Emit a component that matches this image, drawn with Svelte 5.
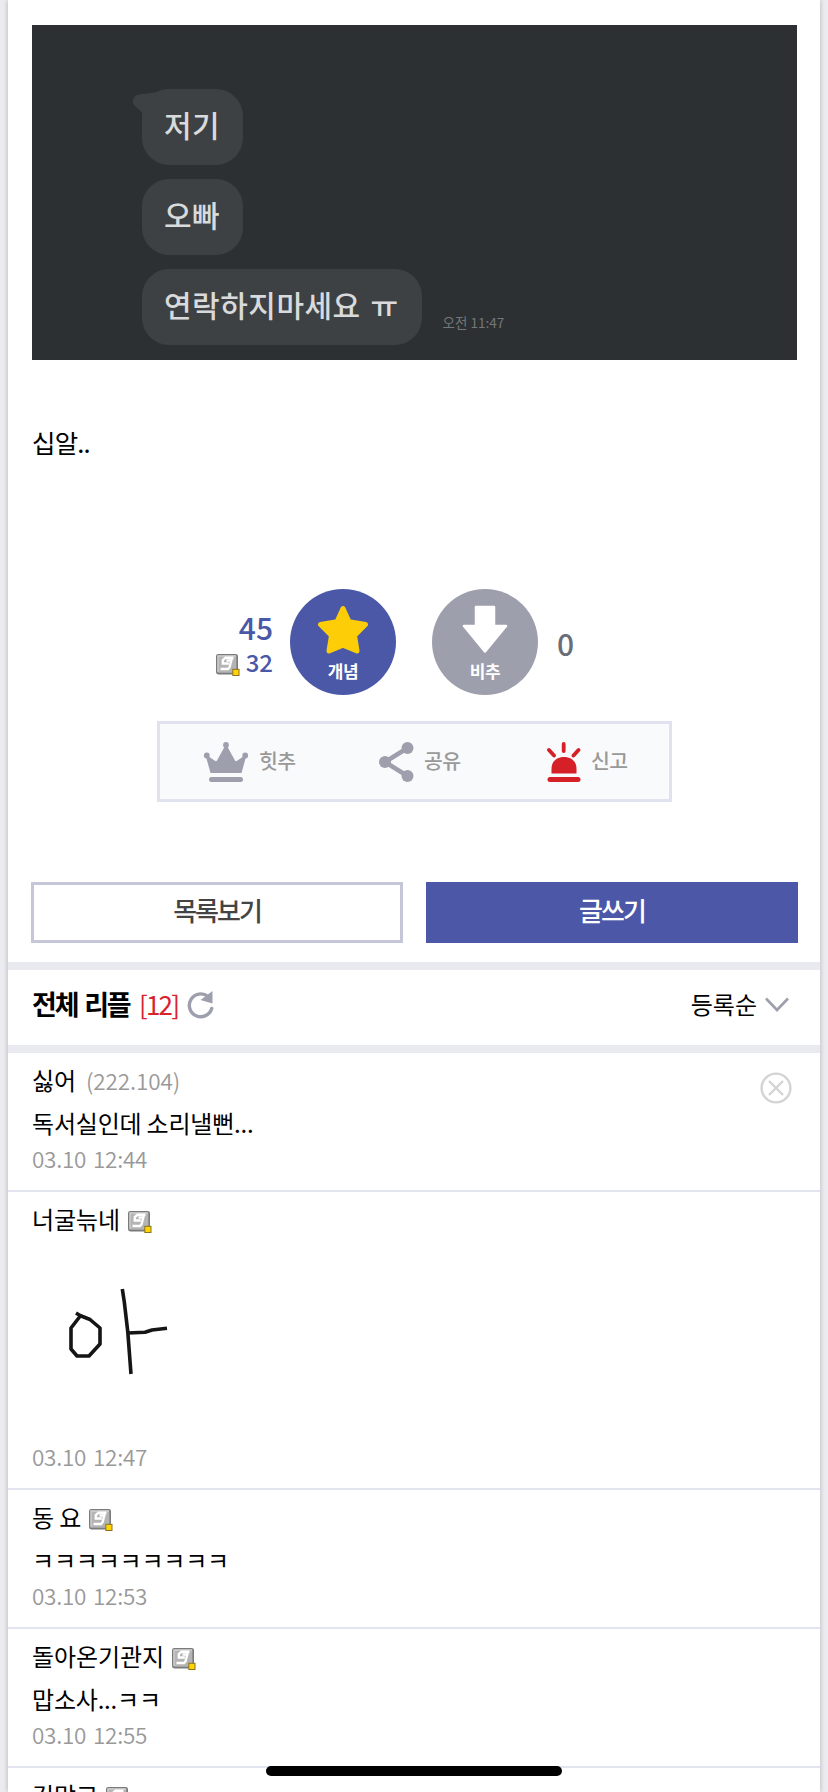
<script>
const messages = ['저기', '오빠', '연락하지마세요 ㅠ'];

const comments = [
    { name: '싫어', ip: '(222.104)', text: '독서실인데 소리낼뻔...', date: '03.10 12:44' },
    { name: '너굴늒네', drawing: true, date: '03.10 12:47' },
    { name: '동 요', text: 'ㅋㅋㅋㅋㅋㅋㅋㅋㅋ', date: '03.10 12:53' },
    { name: '돌아온기관지', text: '맙소사...ㅋㅋ', date: '03.10 12:55' },
    { name: '김망고', text: '', date: '' }
];
</script>

{#snippet memberIcon()}
    <svg class="member-icon" viewBox="0 0 24 22" width="24" height="22">
        <rect x="0.8" y="0.8" width="20.4" height="18.8" rx="1.5" fill="#b4b4b4" stroke="#7b7b7b" stroke-width="1.6" />
        <path d="M2 18V2h18" fill="none" stroke="#cfcfcf" stroke-width="1.4" />
        <path d="M17.5 3.8H9.5L6.8 6v3.5h6M16 4l-2.5 9.5-1.500 1.500H4.500M10.5 6.5h4" fill="none" stroke="#fff" stroke-width="2.4" />
        <rect x="16.8" y="15.3" width="6.2" height="6.2" fill="#ffd400" stroke="#8a7420" stroke-width="1" />
    </svg>
{/snippet}

<div class="page">
    <div class="chat">
        {#each messages as message, i}
            <div class="chat-row">
                <div class="bubble">
                    {#if i === 0}
                        <svg class="tail" viewBox="0 0 30 24" width="30" height="24"><path d="M30 1 22 3.5 6 5.5C0 6.5-2 13 2 17l9 8h19z" fill="#3d4143" /></svg>
                    {/if}
                    <span>{message}</span>
                </div>
                {#if i === messages.length - 1}
                    <span class="chat-time">오전 11:47</span>
                {/if}
            </div>
        {/each}
    </div>

    <p class="post-text">십알..</p>

    <div class="votes">
        <div class="vote-count up">
            <strong>45</strong>
            <div class="member-count">{@render memberIcon()}<span>32</span></div>
        </div>
        <button class="vote recommend">
            <svg viewBox="0 0 52 50" width="52" height="50"><path d="M26 3.500 32 16.800 48.500 19.500 37.500 30.500 40 46 26 40.300 12 46 14.500 30.500 3.500 19.500 20 16.800Z" fill="#fdce07" stroke="#fdce07" stroke-width="5" stroke-linejoin="round" /></svg>
            <span>개념</span>
        </button>
        <button class="vote against">
            <svg viewBox="0 0 52 50" width="52" height="50"><path d="M17 2h18v19h12L26 46.500 5 21h12z" fill="#fff" stroke="#fff" stroke-width="2.500" stroke-linejoin="round" /></svg>
            <span>비추</span>
        </button>
        <div class="vote-count down">0</div>
    </div>

    <div class="actions">
        <button class="action hit">
            <svg viewBox="0 0 46 40" width="46" height="40" fill="#9e9fac">
                <circle cx="23" cy="3" r="2.900" /><circle cx="3.800" cy="13.500" r="2.900" /><circle cx="42.200" cy="13.500" r="2.900" />
                <path d="M22 4h2l8 14.500q.8 1.200 2 .2l7.500-5 1.500 1L38.500 31H7.500L3 14.700l1.500-1 7.500 5q1.200 1 2-.2z" />
                <rect x="6" y="35" width="34" height="5" rx="2.500" />
            </svg>
            <span>힛추</span>
        </button>
        <button class="action share">
            <svg viewBox="0 0 35 40" width="35" height="40" fill="#9e9fac">
                <path d="M28.500 6 6 20l22.500 14" fill="none" stroke="#9e9fac" stroke-width="4.500" />
                <circle cx="28.500" cy="6" r="6" /><circle cx="6" cy="20" r="6" /><circle cx="28.500" cy="34" r="6" />
            </svg>
            <span>공유</span>
        </button>
        <button class="action report">
            <svg viewBox="0 0 34 40" width="34" height="40" fill="#d62027">
                <path d="M16.700 2v7M2 8l5 5.500M31.500 8l-5 5.500" fill="none" stroke="#d62027" stroke-width="3.800" stroke-linecap="round" />
                <path d="M4.500 31.500V27C4.500 19 10 15 17 15s12.500 4 12.500 12v4.500z" />
                <rect x="0.500" y="35" width="33" height="5" rx="2.500" />
            </svg>
            <span>신고</span>
        </button>
    </div>

    <div class="buttons">
        <button class="btn list">목록보기</button>
        <button class="btn write">글쓰기</button>
    </div>

    <div class="reply-head">
        <h2>전체 리플</h2>
        <span class="total">[12]</span>
        <svg viewBox="0 0 28 28" width="28" height="28">
            <path d="M21 5.500A11.400 11.400 0 1 0 24.700 17.500" fill="none" stroke="#9e9fac" stroke-width="3.400" stroke-linecap="round" />
            <path d="M25.500 0v12.500L13.500 9z" fill="#9e9fac" />
        </svg>
        <span class="sort">등록순</span>
        <svg viewBox="0 0 24 15" width="24" height="15"><path d="M1 1.500 12 13 23 1.500" fill="none" stroke="#9e9fac" stroke-width="2.600" /></svg>
    </div>

    <ul class="comments">
        {#each comments as comment}
            <li>
                <div class="author">
                    <span>{comment.name}</span>
                    {#if comment.ip}
                        <span class="ip">{comment.ip}</span>
                        <svg class="delete" viewBox="0 0 32 32" width="32" height="32"><circle cx="16" cy="16" r="14.400" /><path d="m9 9 14 14M23 9 9 23" /></svg>
                    {:else}
                        {@render memberIcon()}
                    {/if}
                </div>
                {#if comment.drawing}
                    <svg class="drawing" viewBox="0 0 200 200" width="200" height="200">
                        <path d="M44 72l4 2.500 10 4 10 8.500v16l-11 12H45l-6-7V87l8.500-11M90.300 48l2 13 3.500 30 3.200 42M96 92l17-.700 7-2.300 15-1.700" />
                    </svg>
                {:else}
                    <p>{comment.text}</p>
                {/if}
                <time>{comment.date}</time>
            </li>
        {/each}
    </ul>
</div>

<div class="home-bar"></div>

<style>
    :global(body) {
        background: #ecebf0;
        overflow: hidden;
    }
    .page {
        box-sizing: border-box;
        height: 1792px;
        margin: 0 8px;
        padding-top: 25px;
        overflow: hidden;
        background: #fff;
        box-shadow: 0 0 5px rgba(0, 0, 0, 0.25);
        color: #000;
        font-family: "Noto Sans CJK KR", sans-serif;
    }
    button {
        padding: 0;
        border: none;
        font-family: inherit;
    }
    svg {
        display: block;
        flex: none;
    }

    .chat {
        box-sizing: border-box;
        display: flex;
        flex-direction: column;
        gap: 14px;
        height: 335px;
        margin: 0 23px 0 24px;
        padding: 64px 0 0 110px;
        background: #2c3032;
    }
    .chat-row {
        display: flex;
        align-items: flex-end;
        gap: 21px;
    }
    .bubble {
        position: relative;
        height: 76px;
        padding: 0 23px 0 22px;
        border-radius: 27px;
        background: #3d4143;
        color: #d9dadb;
        font-size: 30px;
        font-weight: 500;
        line-height: 71px;
        letter-spacing: 0.500px;
        word-spacing: 2.500px;
    }
    .tail {
        position: absolute;
        left: -9px;
        top: 0;
    }
    .bubble span {
        position: relative;
    }
    .chat-time {
        margin-bottom: 13px;
        color: #747779;
        font-size: 13.500px;
        line-height: 20px;
    }

    .post-text {
        margin: 62px 24px 0;
        height: 167px;
        font-size: 25.500px;
        line-height: 40px;
        letter-spacing: -0.800px;
    }

    .votes {
        display: flex;
        align-items: center;
        height: 106px;
    }
    .vote-count {
        font-size: 30px;
        font-weight: 500;
        line-height: 34px;
    }
    .up {
        width: 265px;
        margin-right: 17px;
        padding-top: 5px;
        color: #4b58a7;
        text-align: right;
    }
    .up strong {
        display: block;
        font-weight: 500;
        line-height: 35px;
    }
    .member-count {
        display: flex;
        justify-content: flex-end;
        align-items: center;
        gap: 6px;
        font-size: 24px;
    }
    .member-count .member-icon,
    .author .member-icon {
        margin-top: 5px;
    }
    .down {
        margin-left: 19px;
        padding-top: 2px;
        color: #686d79;
    }
    .vote {
        display: flex;
        flex-direction: column;
        align-items: center;
        width: 106px;
        height: 106px;
        padding-top: 16px;
        border-radius: 50%;
        color: #fff;
        font-size: 17px;
        font-weight: 700;
        line-height: 31px;
        letter-spacing: -0.300px;
    }
    .recommend {
        background: #4b58a7;
    }
    .against {
        margin-left: 36px;
        background: #9e9fac;
    }

    .actions {
        box-sizing: border-box;
        display: flex;
        width: 515px;
        height: 81px;
        margin: 26px 0 0 149px;
        padding-left: 43px;
        border: 3px solid #e1e2ef;
        background: #f9fafc;
    }
    .action {
        display: flex;
        align-items: center;
        gap: 10px;
        background: none;
        color: #999;
        font-size: 20.500px;
        font-weight: 500;
        line-height: 30px;
        letter-spacing: -0.500px;
    }
    .hit {
        width: 176px;
    }
    .share {
        width: 168px;
    }
    .action svg {
        margin-top: 1px;
    }
    .action span {
        padding-bottom: 3px;
    }

    .buttons {
        display: grid;
        grid-template-columns: 1fr 1fr;
        gap: 23px;
        margin: 80px 22px 19px 23px;
    }
    .btn {
        box-sizing: border-box;
        height: 61px;
        padding-bottom: 7px;
        font-size: 26px;
        font-weight: 500;
        letter-spacing: -2px;
    }
    .list {
        border: 3px solid #c5c6d8;
        background: #fff;
        color: #444;
    }
    .write {
        background: #4c58a7;
        color: #fff;
    }

    .reply-head {
        box-sizing: border-box;
        display: flex;
        align-items: center;
        height: 91px;
        padding: 0 31px 0 24px;
        border: solid #e9eaf0;
        border-width: 8px 0;
        font-size: 25px;
        line-height: 40px;
    }
    h2 {
        width: 107px;
        margin: 0 0 8px;
        font-size: 27px;
        font-weight: 700;
        letter-spacing: -2.200px;
        word-spacing: 3px;
        white-space: nowrap;
    }
    .total {
        width: 48px;
        margin-bottom: 8px;
        color: #d8232e;
        font-size: 26px;
        letter-spacing: -1.800px;
    }
    .reply-head svg {
        margin-bottom: 6px;
    }
    .sort {
        margin: 0 8px 8px auto;
        font-size: 24px;
    }

    .comments {
        margin: 0;
        padding: 0;
        list-style: none;
    }
    li {
        box-sizing: border-box;
        height: 139px;
        padding: 7px 24px 0;
        border-bottom: 2px solid #e2e5f0;
        font-size: 24px;
    }
    li:nth-child(2) {
        height: 298px;
    }
    .author {
        display: flex;
        align-items: center;
        gap: 8px;
        height: 40px;
    }
    .author,
    p {
        letter-spacing: -0.100px;
        line-height: 40px;
    }
    li p {
        height: 40px;
        margin: 3px 0 0;
        letter-spacing: -0.200px;
    }
    .ip,
    time {
        color: #999;
        font-size: 22.500px;
        font-weight: 350;
        letter-spacing: -0.250px;
        word-spacing: 2px;
    }
    .ip {
        margin-left: 2px;
        letter-spacing: -0.100px;
    }
    .delete {
        margin: 15px 4px 0 auto;
        fill: none;
        stroke: #d4d4d4;
        stroke-width: 2.400;
    }
    time {
        display: block;
        line-height: 31px;
    }
    .drawing {
        margin: 2px 0 0;
        fill: none;
        stroke: #151515;
        stroke-width: 3.600;
        stroke-linejoin: round;
    }

    .home-bar {
        position: fixed;
        left: 266px;
        bottom: 16px;
        width: 296px;
        height: 10px;
        border-radius: 5px;
        background: #000;
    }
</style>
